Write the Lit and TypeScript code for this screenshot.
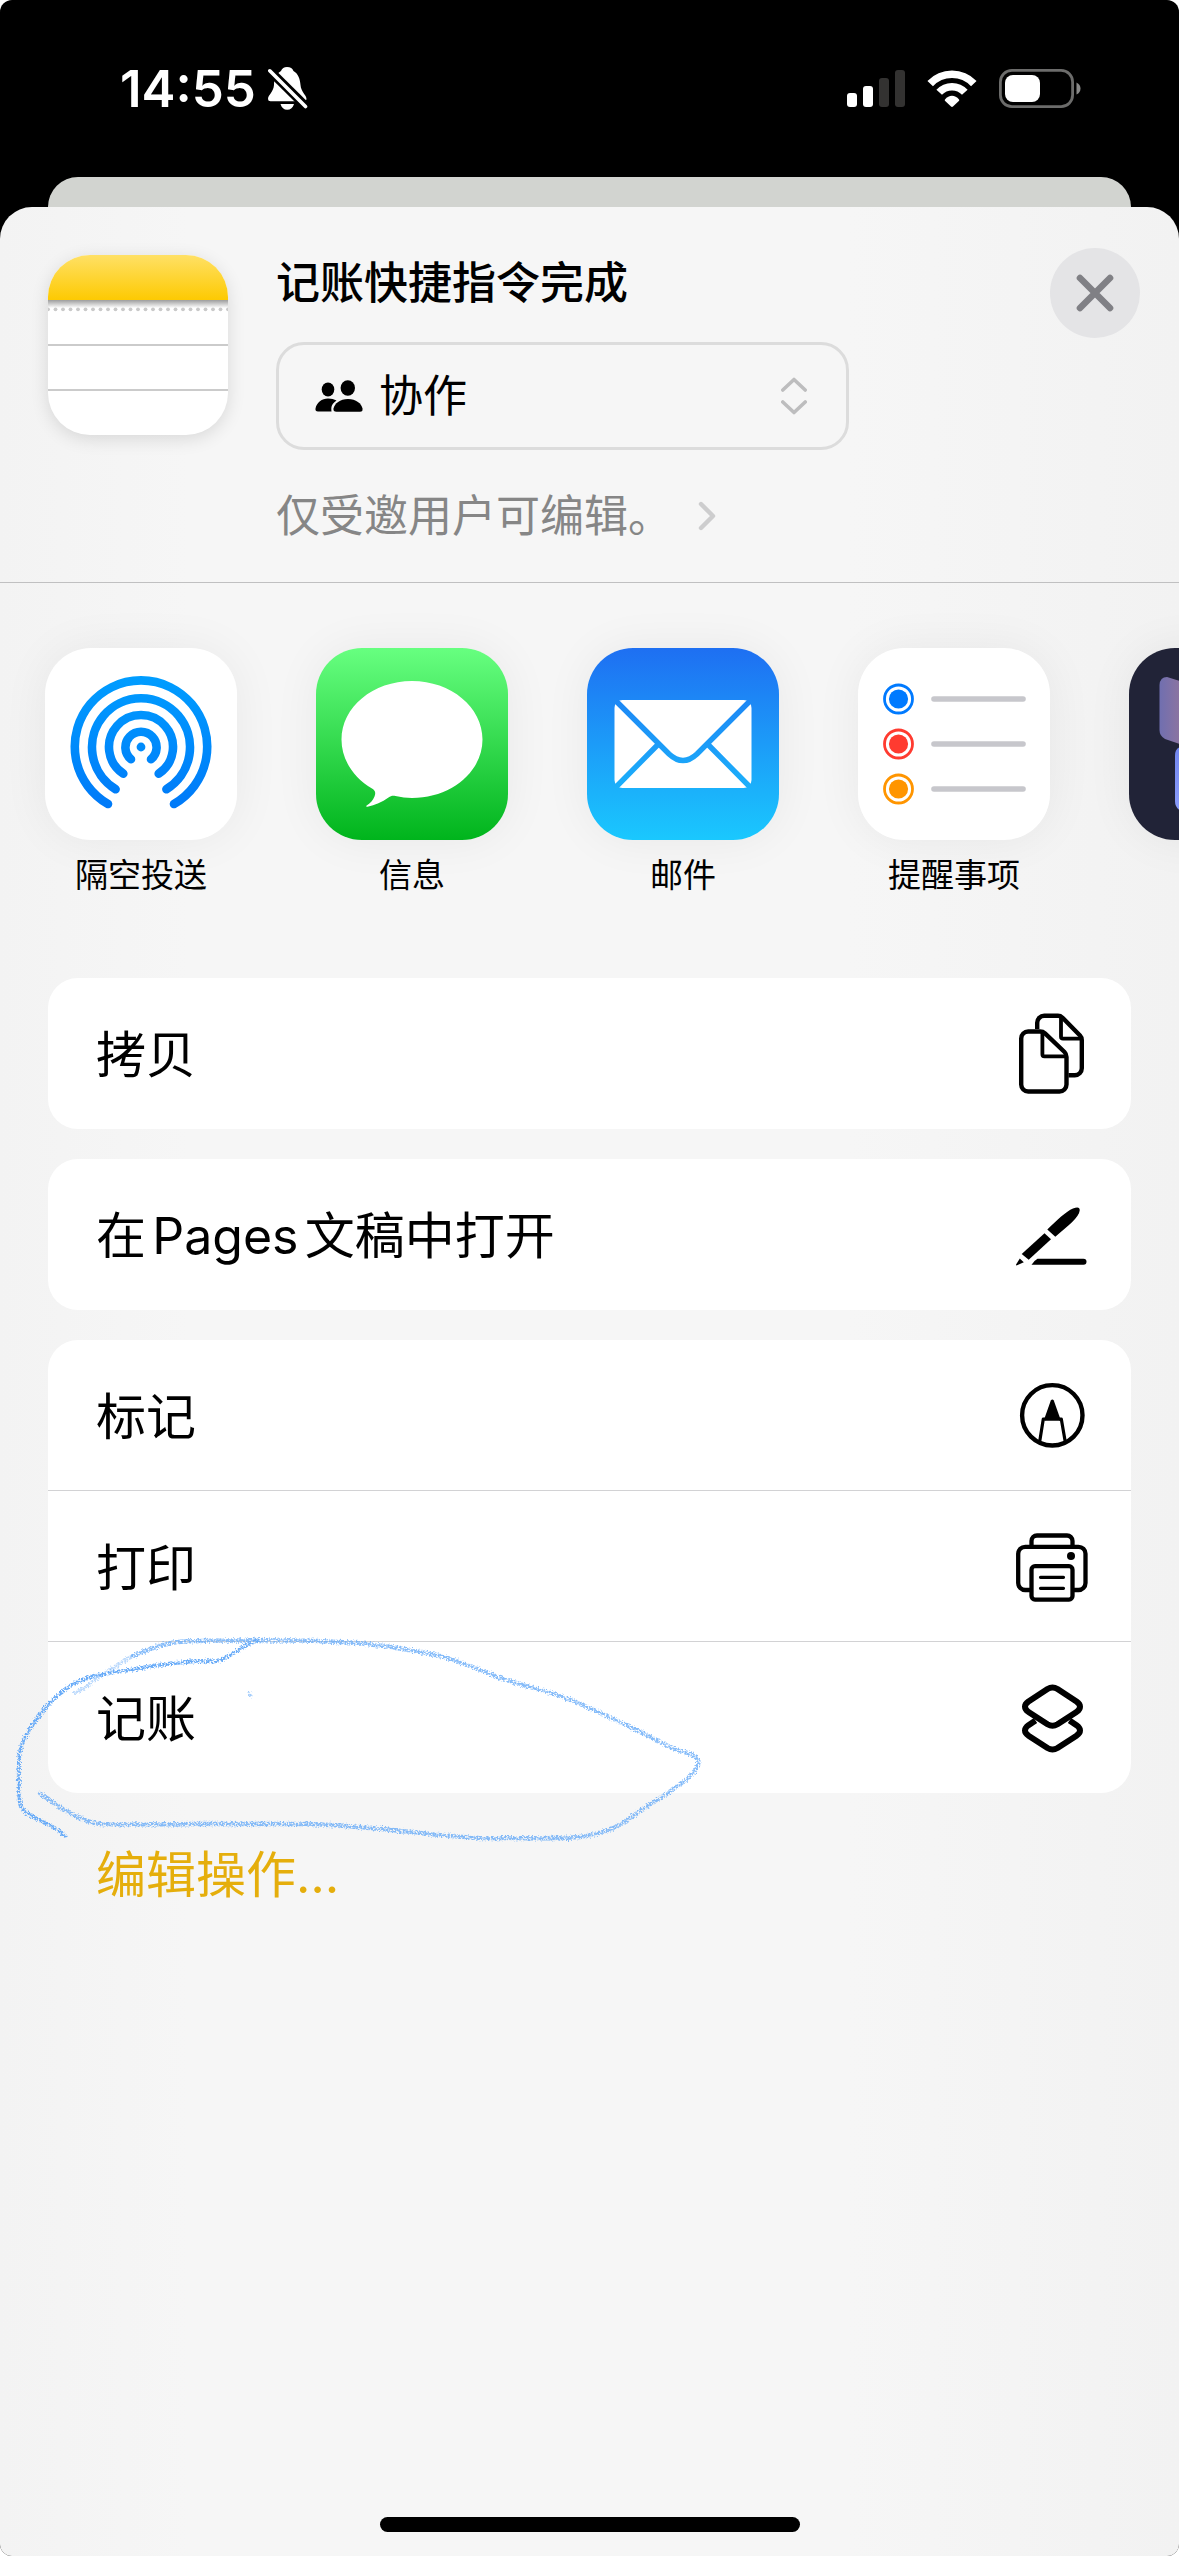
import { LitElement, html, css, svg } from "lit";
import { customElement } from "lit/decorators.js";

interface ShareApp {
  label: string;
  tone: string;
  art: unknown;
}

interface Action {
  label: string;
  icon: unknown;
}

const airdrop = svg`
  <defs>
    <linearGradient id="air" gradientUnits="userSpaceOnUse" x1="0" y1="28" x2="0" y2="162">
      <stop offset="0" stop-color="#009dff" />
      <stop offset="1" stop-color="#0079f8" />
    </linearGradient>
  </defs>
  <g fill="none" stroke="url(#air)" stroke-width="8.6" stroke-linecap="round">
    <path d="M63 156A66.2 66.2 0 1 1 129 156" />
    <path d="M70.6 141.2A49 49 0 1 1 121.4 141.2" />
    <path d="M78.3 125.7A32 32 0 1 1 113.7 125.7" />
    <path d="M86 111.3A15.6 15.6 0 1 1 106 111.3" />
  </g>
  <circle cx="96" cy="99" r="4.4" fill="#008bfb" />`;

const messages = svg`
  <path fill="#fff" d="M96 33C57 33 25.500 59.200 25.500 91.500C25.500 112 38 130.200 56 140.500C59.500 142.500 59.800 145 58.500 148.500C57 152.500 54 155.500 50.700 157.500C49.800 158.200 50.400 158.900 51.500 158.700C59 157.400 66 154 72.500 149.500C75 147.800 76.500 147.400 79.500 148C85 149.300 90.500 150 96 150C135 150 166.500 123.800 166.500 91.500C166.500 59.200 135 33 96 33Z" />`;

const mail = svg`
  <defs>
    <linearGradient id="mailbg" gradientUnits="userSpaceOnUse" x1="0" y1="0" x2="0" y2="192">
      <stop offset="0" stop-color="#1e6ff2" />
      <stop offset="1" stop-color="#1ac8fe" />
    </linearGradient>
  </defs>
  <rect x="27.500" y="52" width="137" height="88" rx="8" fill="#fff" />
  <g fill="none" stroke="url(#mailbg)" stroke-width="5.400">
    <path d="M27 51L82 106Q96 119 110 106L165 51" />
    <path d="M27 141L70.500 97M165 141L121.500 97" />
  </g>`;

const reminders = svg`
  ${[
    { y: 51, c: "#007aff" },
    { y: 96, c: "#ff3b30" },
    { y: 141, c: "#ff9500" },
  ].map(
    (d) => svg`
      <circle cx="40.500" cy=${d.y} r="14" fill="none" stroke=${d.c} stroke-width="2.800" />
      <circle cx="40.500" cy=${d.y} r="9.600" fill=${d.c} />
      <path d="M76 ${d.y}H165" stroke="#c7c7cc" stroke-width="5.600" stroke-linecap="round" />`
  )}`;

const tiles = svg`
  <defs>
    <linearGradient id="tileA" x1="0" y1="0" x2="1" y2="0">
      <stop offset="0" stop-color="#706fb0" />
      <stop offset="0.300" stop-color="#8c74a0" />
      <stop offset="1" stop-color="#d08070" />
    </linearGradient>
    <linearGradient id="tileB" x1="0" y1="0" x2="0" y2="1">
      <stop offset="0" stop-color="#7186ee" />
      <stop offset="1" stop-color="#93a3ff" />
    </linearGradient>
  </defs>
  <path fill="url(#tileA)" d="M38 29L100 48V113L36 91Q30.500 88 30.500 82V37Q31 29 38 29Z" />
  <path fill="url(#tileB)" d="M53 99L120 120V182L52 163Q46 160 46 153V108Q46 99 53 99Z" />`;

const copyIcon = svg`
  <g fill="none" stroke="#000" stroke-width="4.400" stroke-linejoin="round">
    <path d="M27.200 18V11.800A7 7 0 0 1 34.200 4.800H48Q50.500 4.800 52.300 6.500L70 24.500Q71.800 26.300 71.800 29V57.300A7 7 0 0 1 64.800 64.300H58.500" />
    <path d="M51 6V25.700Q51 27.600 53 27.600H71" stroke-width="3.800" />
    <path d="M18.200 20.500H30Q33 20.500 35 22.300L54.500 41Q56.500 43 56.500 46V73.500A7 7 0 0 1 49.500 80.500H18.200A7 7 0 0 1 11.200 73.500V27.500A7 7 0 0 1 18.200 20.500Z" />
    <path d="M32.400 21.500V43.300Q32.400 45.400 34.400 45.400H56" stroke-width="3.800" />
  </g>`;

const penIcon = svg`
  <path d="M37.300 37.500C47 28 56 19.500 63 16.500Q70 13.500 69.700 18.500C69 25.500 58 34 45.300 44.700Z" />
  <path d="M34.500 41.300L41 47.300L18.700 67.700L11.700 62Z" />
  <path d="M9.800 66.500L13.800 70.300L6.500 73.500Q5.800 73.200 6.100 72.400Z" />
  <path d="M21.500 72.700Q23.500 69 27.500 66.700H73.500A3 3 0 0 1 73.500 72.700Z" />`;

const markupIcon = svg`
  <circle cx="42.300" cy="42.300" r="30.200" fill="none" stroke="#000" stroke-width="4.400" />
  <path d="M40.800 27.600Q42.300 25.400 43.800 27.600L50 45V47.700H34.600V45Z" />
  <path d="M35.500 46H33.300L29.700 68.500M49 46H51.300L55.200 68.500" fill="none" stroke="#000" stroke-width="3.200" stroke-linejoin="round" />`;

const printIcon = svg`
  <g fill="none" stroke="#000" stroke-width="4.300">
    <path d="M21.500 21.500V17A5.500 5.500 0 0 1 27 11.500H57A5.500 5.500 0 0 1 62.500 17V21.500" />
    <path d="M20.500 66H15.200A7 7 0 0 1 8.200 59V29.800A7 7 0 0 1 15.200 22.800H68.500A7 7 0 0 1 75.500 29.800V59A7 7 0 0 1 68.500 66H63.500" />
    <rect x="21.500" y="42.200" width="41" height="33.400" rx="3.500" />
    <path d="M30.500 53.300H53.500M30.500 64.300H53.500" stroke-width="3.200" stroke-linecap="round" />
  </g>
  <circle cx="61" cy="32" r="4" />`;

const stackIcon = svg`
  <g fill="none" stroke="#000" stroke-width="6" stroke-linejoin="round">
    <path d="M37.500 14Q42.500 11 47.500 14L66.500 26.500Q73.500 31.500 66.500 37L47.500 49.300Q42.500 52.300 37.500 49.300L18.500 37Q11.500 31.500 18.500 26.500Z" />
    <path d="M25.500 45.500L18.500 50.200Q11.500 55.300 18.500 60.700L37.500 73Q42.500 76 47.500 73L66.500 60.700Q73.500 55.300 66.500 50.200L59.500 45.500" />
  </g>`;

const apps: ShareApp[] = [
  { label: "隔空投送", tone: "white", art: airdrop },
  { label: "信息", tone: "green", art: messages },
  { label: "邮件", tone: "blue", art: mail },
  { label: "提醒事项", tone: "white", art: reminders },
  { label: "", tone: "dark", art: tiles },
];

const groups: Action[][] = [
  [{ label: "拷贝", icon: copyIcon }],
  [{ label: "在Pages文稿中打开", icon: penIcon }],
  [
    { label: "标记", icon: markupIcon },
    { label: "打印", icon: printIcon },
    { label: "记账", icon: stackIcon },
  ],
];

@customElement("app-root")
export class AppRoot extends LitElement {
  static styles = css`
    :host {
      display: block;
      background: #fff;
      color: #000;
      font-family: Inter, "Noto Sans CJK SC", sans-serif;
      font-size: 50px;
      text-autospace: normal;
    }
    * {
      box-sizing: border-box;
    }
    svg {
      display: block;
      flex: none;
    }
    button,
    select {
      margin: 0;
      padding: 0;
      border: 0;
      background: none;
      color: inherit;
      font: inherit;
      text-align: left;
      cursor: pointer;
    }
    .screen {
      display: flex;
      flex-direction: column;
      min-height: 100vh;
      overflow: hidden;
      border-radius: 12px;
      background: #000;
    }
    .status {
      display: flex;
      align-items: center;
      justify-content: space-between;
      height: 177px;
      padding: 0 98px 0 120px;
      color: #fff;
    }
    .clock,
    .signals {
      display: flex;
      align-items: center;
    }
    .clock {
      gap: 12px;
      font-size: 51px;
      font-weight: 600;
    }
    .signals {
      gap: 22px;
    }
    .behind {
      height: 30px;
      margin: 0 48px;
      border-radius: 30px 30px 0 0;
      background: #d2d4d0;
    }
    .sheet {
      display: flex;
      flex: 1;
      flex-direction: column;
      border-radius: 32px 32px 0 0;
      background: linear-gradient(90deg, #f3f3f3, #f6f6f6 16%, #f6f6f6 72%, #f2f2f2);
    }
    .header {
      display: flex;
      align-items: flex-start;
      padding: 41px 39px 39px 48px;
      border-bottom: 1px solid #c0c0c1;
    }
    .doc {
      width: 180px;
      height: 180px;
      margin: 7px 48px 0 0;
      border-radius: 42px;
      overflow: hidden;
      background: #fff;
      box-shadow: 0 4px 18px rgba(0, 0, 0, 0.12);
    }
    .info {
      flex: 1;
      display: flex;
      flex-direction: column;
      align-items: flex-start;
      padding-top: 8px;
      font-size: 44px;
      line-height: 54px;
    }
    .title {
      margin: 0 0 32px;
      font-size: 44px;
      font-weight: 500;
    }
    .mode {
      display: flex;
      align-items: center;
      width: 100%;
      max-width: 573px;
      height: 108px;
      margin-bottom: 39px;
      padding: 0 39px 0 36px;
      border: 3px solid #dcdcdc;
      border-radius: 28px;
    }
    .mode-select {
      flex: 1;
      height: 100%;
      margin-left: 16px;
      appearance: none;
      outline: none;
    }
    .access {
      display: flex;
      align-items: center;
      gap: 26px;
      color: #868686;
    }
    .close {
      display: grid;
      place-items: center;
      width: 90px;
      height: 90px;
      border-radius: 50%;
      background: #e4e4e6;
    }
    .apps {
      display: flex;
      gap: 79px;
      padding: 65px 45px 81px;
      overflow: hidden;
    }
    .app {
      display: flex;
      flex: none;
      flex-direction: column;
      align-items: center;
      gap: 13px;
      width: 192px;
      font-size: 33px;
      line-height: 44px;
      white-space: nowrap;
    }
    .tile {
      width: 192px;
      height: 192px;
      border-radius: 46px;
      box-shadow: 0 0 48px rgba(0, 0, 0, 0.06);
    }
    .tile.white {
      background: #fff;
    }
    .tile.green {
      background: linear-gradient(#67ff80, #00b41c);
    }
    .tile.blue {
      background: linear-gradient(#1e6ff2, #1ac8fe);
    }
    .tile.dark {
      background: #212337;
    }
    .actions {
      display: flex;
      flex-direction: column;
      gap: 30px;
      padding: 0 48px;
    }
    .group {
      position: relative;
    }
    .card {
      overflow: hidden;
      border-radius: 30px;
      background: #fff;
    }
    .row {
      display: flex;
      align-items: center;
      justify-content: space-between;
      width: 100%;
      height: 151px;
      padding: 0 37px 0 48px;
      border-bottom: 1px solid transparent;
    }
    .row:not(:last-child) {
      border-bottom-color: #d2d2d4;
    }
    .row-label {
      padding-bottom: 4px;
    }
    .scribble {
      position: absolute;
      left: -48px;
      bottom: -77px;
      pointer-events: none;
    }
    .edit {
      align-self: flex-start;
      height: 100px;
      padding: 0 48px 4px;
      color: #e5ae0c;
    }
    .home {
      width: 420px;
      height: 15px;
      margin: auto auto 24px;
      border-radius: 8px;
      background: #000;
    }
  `;

  private renderStatus() {
    return html`
      <div class="status">
        <div class="clock">
          <span>14:55</span>
          <svg width="40" height="44" viewBox="0 0 40 44" aria-hidden="true">
            <path fill="#fff" d="M19 0C16 0 14 1.500 13 4C8 7 6 12 6 18C5.500 25 0 28 0 32Q0 34.300 2.500 34.300H36Q38.500 34.300 38.500 32C38.500 28 33 25 32.500 18C32 12 30.500 7 25.500 4C24.500 1.500 22.500 0 19 0ZM12.500 37H26C25 40.800 22.500 42.800 19.200 42.800C16 42.800 13.500 40.800 12.500 37Z" />
            <path d="M-2 0L41 42.500" stroke="#000" stroke-width="9" />
            <path d="M1.800 3.800L37.500 39.500" stroke="#fff" stroke-width="3.600" stroke-linecap="round" />
          </svg>
        </div>
        <div class="signals">
          <svg width="58" height="37" viewBox="0 0 58 37" aria-hidden="true">
            <rect x="0" y="23" width="10" height="14" rx="3" fill="#fff" />
            <rect x="16" y="16" width="10" height="21" rx="3" fill="#fff" />
            <rect x="32" y="8" width="10" height="29" rx="3" fill="#333231" />
            <rect x="48" y="0" width="10" height="37" rx="3" fill="#333231" />
          </svg>
          <svg width="50" height="37" viewBox="0 0 50 37" aria-hidden="true">
            <g fill="none" stroke="#fff" stroke-width="7.600">
              <path d="M3.200 13.600A30 30 0 0 1 46.800 13.600" />
              <path d="M12.200 22.300A17.400 17.400 0 0 1 37.800 22.300" />
            </g>
            <path fill="#fff" d="M18 29.500C22 24.600 28 24.600 32 29.500Q32.500 30.300 31.800 31L26 36.500Q25 37.300 24 36.500L18.200 31Q17.500 30.300 18 29.500Z" />
          </svg>
          <svg width="82" height="39" viewBox="0 0 82 39" aria-hidden="true">
            <rect x="1.400" y="1.400" width="72.200" height="36.200" rx="11.500" fill="none" stroke="#6c6c6b" stroke-width="2.800" />
            <rect x="6" y="6" width="35" height="27" rx="8" fill="#fff" />
            <path fill="#8a8a89" d="M77.500 13.500Q81.500 15.500 81.500 19.500Q81.500 23.500 77.500 25.500Z" />
          </svg>
        </div>
      </div>
    `;
  }

  private renderHeader() {
    const holes = Array.from({ length: 25 }, (_, i) => i * 7.5);
    return html`
      <header class="header">
        <svg class="doc" viewBox="0 0 180 180" aria-hidden="true">
          <defs>
            <linearGradient id="pad" x1="0" y1="0" x2="0" y2="1">
              <stop offset="0" stop-color="#ffe065" />
              <stop offset="1" stop-color="#fdca02" />
            </linearGradient>
            <linearGradient id="fold" x1="0" y1="0" x2="0" y2="1">
              <stop offset="0" stop-color="#9d9d9d" />
              <stop offset="1" stop-color="#fff" />
            </linearGradient>
          </defs>
          <rect width="180" height="45" fill="url(#pad)" />
          <rect y="45" width="180" height="8" fill="url(#fold)" />
          ${holes.map((x) => svg`<circle cx=${x} cy="54.300" r="1.900" fill="#c9c9c9" />`)}
          <path d="M0 90H180M0 135H180" stroke="#cbcbcb" stroke-width="2" />
        </svg>
        <div class="info">
          <h1 class="title">记账快捷指令完成</h1>
          <div class="mode">
            <svg width="48" height="33" viewBox="0 0 48 33" aria-hidden="true">
              <ellipse cx="13" cy="9.500" rx="6.300" ry="6.900" />
              <ellipse cx="32.800" cy="8" rx="7.200" ry="7.700" />
              <path d="M21.500 20.500C15 25 16.500 29 16.500 31.500H3Q0 31.500 0.500 28.500C1.500 22.500 7 18.500 13 18.500C16.500 18.500 19 19.200 21.500 20.500Z" />
              <path d="M33 19C41 19 46.500 23.500 47.500 28.500Q48 31.700 45 31.700H21.500Q18 31.700 18.500 28.500C19.500 23.500 25 19 33 19Z" />
            </svg>
            <select class="mode-select" aria-label="协作">
              <option>协作</option>
            </select>
            <svg width="26" height="38" viewBox="0 0 26 38" aria-hidden="true">
              <path d="M1.800 13L13 2.500L24.200 13M1.800 25L13 35.500L24.200 25" fill="none" stroke="#bdbdbe" stroke-width="3.600" stroke-linecap="round" stroke-linejoin="round" />
            </svg>
          </div>
          <button class="access" type="button">
            仅受邀用户可编辑。
            <svg width="18" height="30" viewBox="0 0 18 30" aria-hidden="true">
              <path d="M3 3L15 15L3 27" fill="none" stroke="#cdcdce" stroke-width="4.400" stroke-linecap="round" stroke-linejoin="round" />
            </svg>
          </button>
        </div>
        <button class="close" type="button" aria-label="关闭">
          <svg width="38" height="38" viewBox="0 0 38 38" aria-hidden="true">
            <path d="M4 4L34 34M34 4L4 34" stroke="#808085" stroke-width="6.600" stroke-linecap="round" />
          </svg>
        </button>
      </header>
    `;
  }

  private renderScribble() {
    return html`
      <svg class="scribble" width="720" height="240" viewBox="0 1630 720 240" aria-hidden="true">
        <defs>
          <filter id="crayon" filterUnits="userSpaceOnUse" x="0" y="1630" width="720" height="240">
            <feTurbulence type="fractalNoise" baseFrequency="0.600" numOctaves="2" seed="4" result="grain" />
            <feDisplacementMap in="SourceGraphic" in2="grain" scale="5" xChannelSelector="R" yChannelSelector="G" result="rough" />
            <feColorMatrix in="grain" type="matrix" values="0 0 0 0 0  0 0 0 0 0  0 0 0 0 0  0 0 4 0 -1.200" result="holes" />
            <feComposite in="rough" in2="holes" operator="in" />
          </filter>
        </defs>
        <g filter="url(#crayon)" fill="none" stroke="#68abf8" stroke-linecap="round" stroke-linejoin="round">
          <path stroke-width="4" d="M65 1836C58 1829 50 1825 39 1820C30 1815 22 1811 20.500 1805C18 1796 19 1780 19 1760C19 1748 24 1738 30 1729C36 1719 41 1713 47 1706C56 1697 64 1689 73 1684C84 1678 92 1676 103 1674C120 1671 132 1670 147 1667C162 1664 174 1663 187 1662C200 1660 206 1662 217 1661C230 1658 243 1645 257 1640" />
          <path stroke-width="4" stroke-opacity="0.450" d="M75 1693C88 1687 95 1679 104 1674C115 1667 123 1661 133 1656" />
          <path stroke-width="4.400" stroke-opacity="0.800" d="M133 1656C144 1651 154 1647 167 1644C178 1641 188 1641 200 1641C220 1640 238 1641 257 1640C280 1641 300 1640 317 1641C336 1642 350 1642 367 1644C394 1647 418 1651 440 1656C462 1662 480 1670 500 1678C520 1685 540 1689 560 1696C580 1703 600 1713 620 1722C638 1731 655 1739 668 1746C678 1751 690 1752 697 1758C701 1764 696 1770 692 1774C676 1790 656 1800 640 1811C630 1818 622 1825 611 1829C601 1833 590 1836 580 1837C560 1839 520 1838 480 1838C450 1837 420 1833 393 1830C360 1827 330 1824 300 1824C270 1824 235 1824 200 1824C165 1824 130 1825 100 1824C88 1823 78 1817 66 1811C57 1806 50 1799 40 1794" />
          <path stroke-width="3" stroke-opacity="0.600" d="M249 1693L251 1696" />
        </g>
      </svg>
    `;
  }

  render() {
    return html`
      <main class="screen">
        ${this.renderStatus()}
        <div class="behind"></div>
        <section class="sheet">
          ${this.renderHeader()}
          <nav class="apps">
            ${apps.map(
              (app) => html`
                <button class="app" type="button">
                  <svg class="tile ${app.tone}" viewBox="0 0 192 192" aria-hidden="true">${app.art}</svg>
                  <span>${app.label}</span>
                </button>
              `
            )}
          </nav>
          <div class="actions">
            ${groups.map(
              (rows, i) => html`
                <div class="group">
                  <div class="card">
                    ${rows.map(
                      (row) => html`
                        <button class="row" type="button">
                          <span class="row-label">${row.label}</span>
                          <svg width="84" height="84" viewBox="0 0 84 84" aria-hidden="true">${row.icon}</svg>
                        </button>
                      `
                    )}
                  </div>
                  ${i === groups.length - 1 ? this.renderScribble() : ""}
                </div>
              `
            )}
            <button class="edit" type="button">编辑操作…</button>
          </div>
          <div class="home"></div>
        </section>
      </main>
    `;
  }
}
